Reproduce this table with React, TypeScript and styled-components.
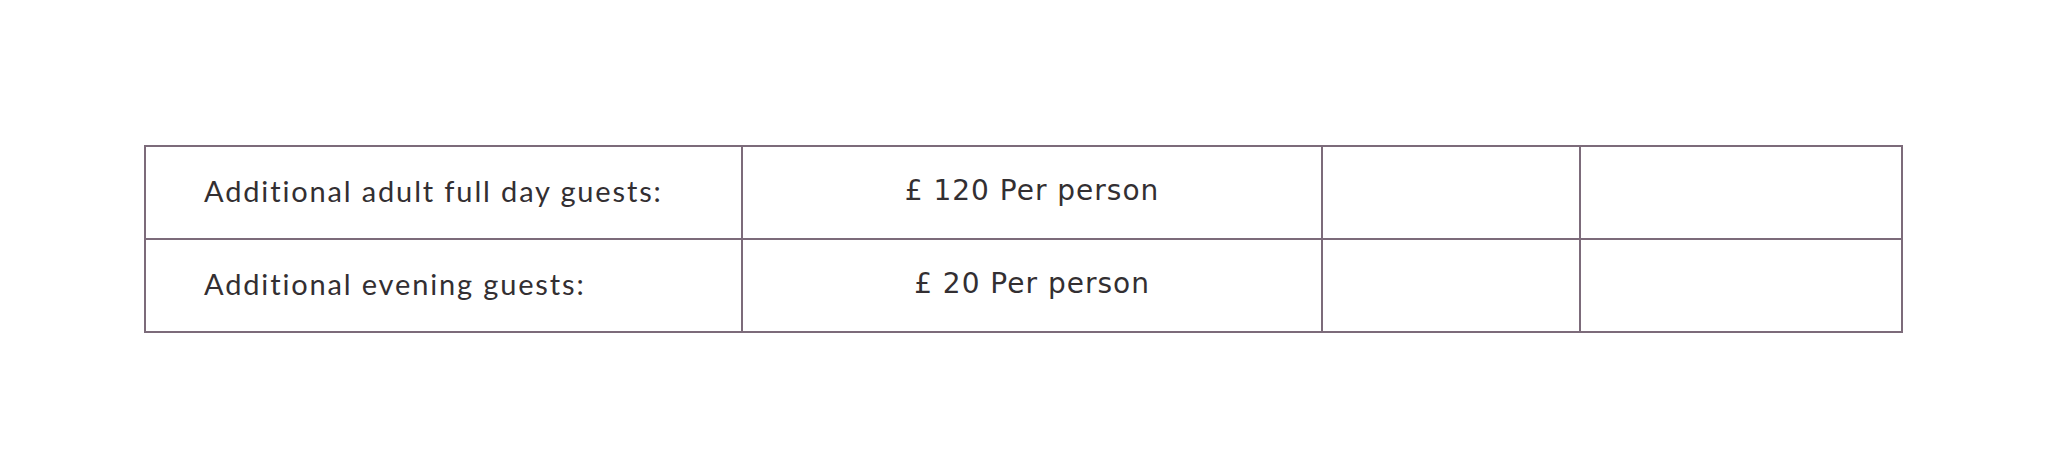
import styled, { createGlobalStyle } from "styled-components";

const GlobalStyle = createGlobalStyle`
  html, body {
    margin: 0;
    padding: 0;
    background: #ffffff;
  }
`;

const Page = styled.div`
  padding: 145px 145px 0 144px;
  height: 472px;
  box-sizing: border-box;
`;

const PriceTable = styled.table`
  width: 1757px;
  border-collapse: collapse;
  table-layout: fixed;
  border: 2px solid #7c6b7a;
`;

const Cell = styled.td<{ $width: number; $align?: "left" | "center" }>`
  width: ${(p) => p.$width}px;
  height: 93px;
  padding: 0 0 0 ${(p) => (p.$align === "center" ? 0 : 58)}px;
  border: 2px solid #7c6b7a;
  text-align: ${(p) => p.$align ?? "left"};
  vertical-align: middle;
  color: #332f32;
  box-sizing: border-box;
`;

const Label = styled.span`
  font-family: Lato, "Open Sans", sans-serif;
  font-weight: 400;
  font-size: 29px;
  letter-spacing: 1.85px;
  position: relative;
  top: -2px;
`;

const Price = styled.span`
  font-family: "DejaVu Sans", "Open Sans", sans-serif;
  font-size: 28px;
  letter-spacing: 1px;
  position: relative;
  top: -2px;
`;

const rows = [
  { label: "Additional adult full day guests:", price: "£ 120 Per person" },
  { label: "Additional evening guests:", price: "£ 20 Per person" },
];

export default function App() {
  return (
    <>
      <GlobalStyle />
      <Page>
        <PriceTable>
          <tbody>
            {rows.map((r) => (
              <tr key={r.label}>
                <Cell $width={597}>
                  <Label>{r.label}</Label>
                </Cell>
                <Cell $width={580} $align="center">
                  <Price>{r.price}</Price>
                </Cell>
                <Cell $width={258} />
                <Cell $width={322} />
              </tr>
            ))}
          </tbody>
        </PriceTable>
      </Page>
    </>
  );
}
